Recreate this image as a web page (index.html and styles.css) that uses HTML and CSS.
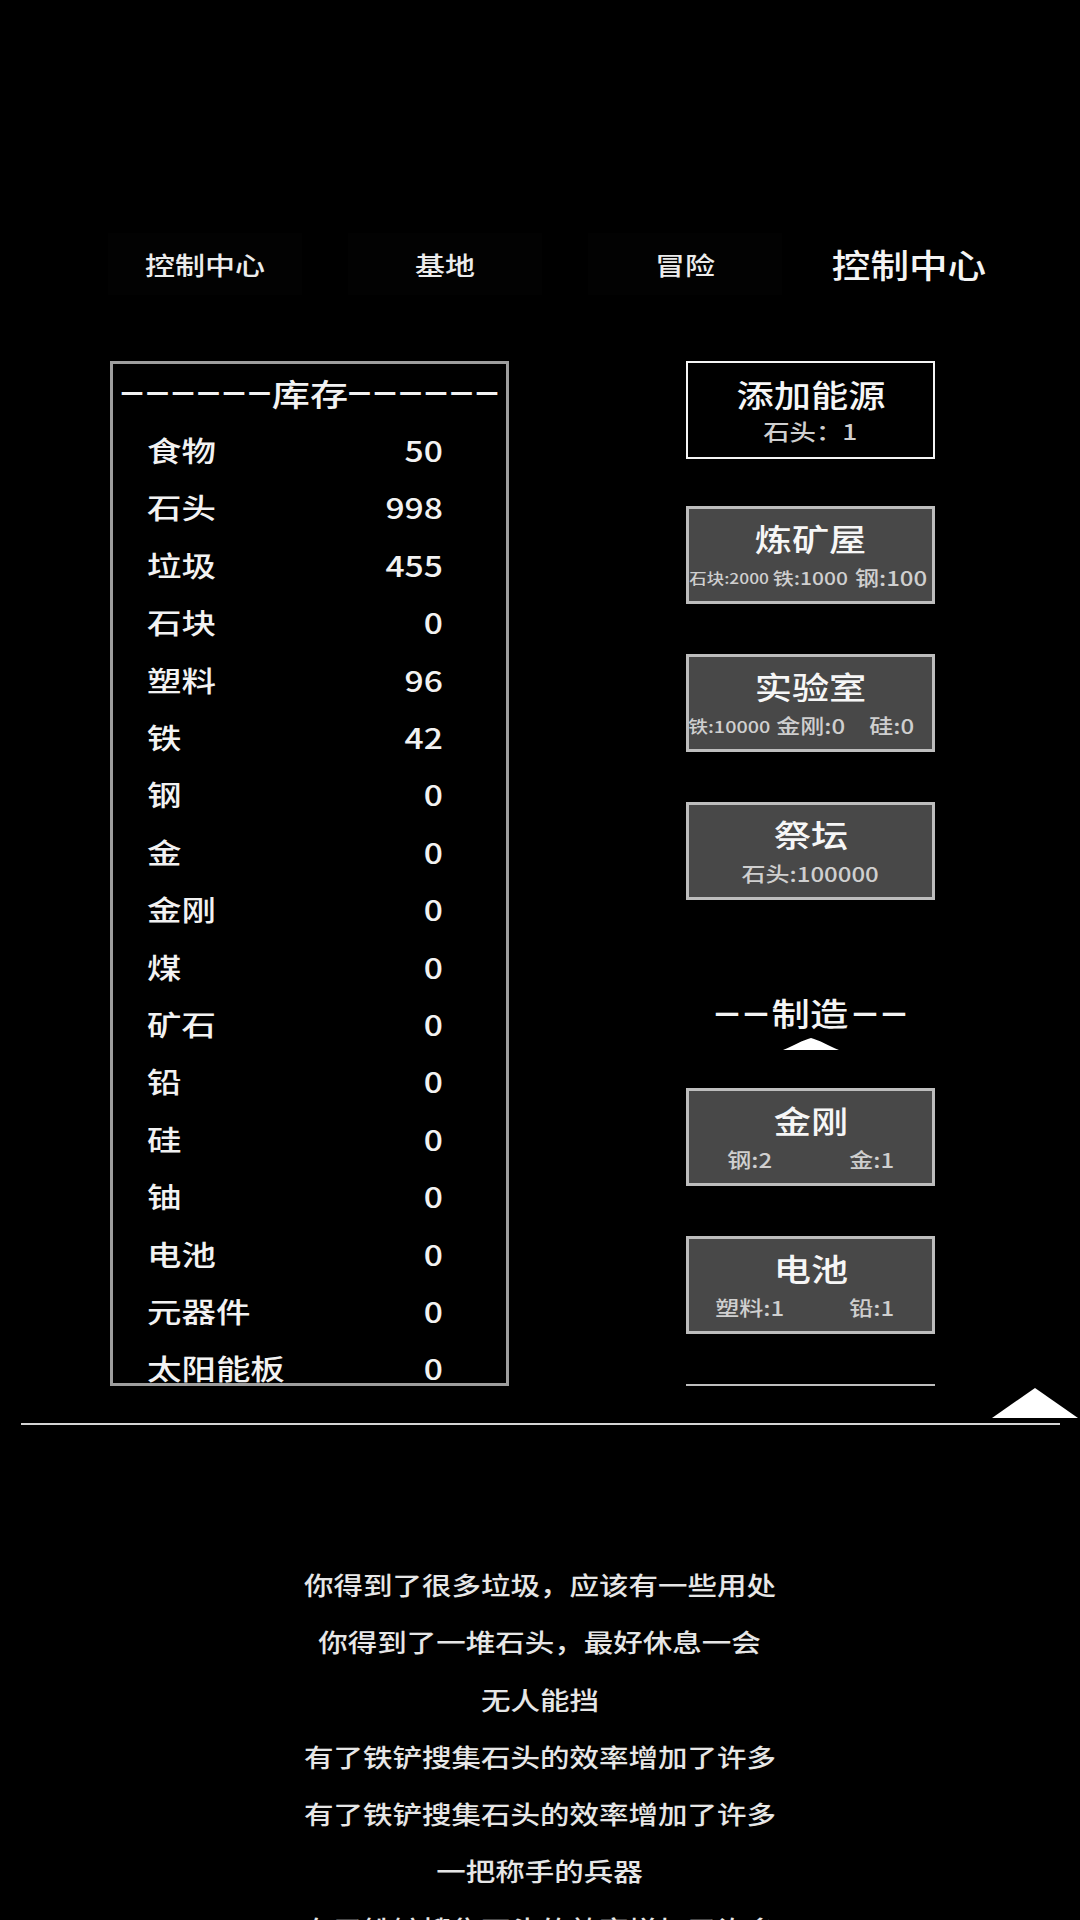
FILE: index.html
```html
<!DOCTYPE html>
<html lang="zh-CN">
<head>
<meta charset="utf-8">
<title>控制中心</title>
<link rel="stylesheet" href="styles.css">
</head>
<body>
<div class="screen">
  <nav class="tabs">
    <div class="tab"><span class="sx">控制中心</span></div>
    <div class="tab"><span class="sx">基地</span></div>
    <div class="tab"><span class="sx">冒险</span></div>
    <div class="page-title"><span class="sx">控制中心</span></div>
  </nav>

  <main class="main">
    <section class="stock">
      <div class="stock-title"><span class="dash">——————</span><span class="sx">库存</span><span class="dash">——————</span></div>
      <ul class="stock-list">
        <li class="row"><span class="name">食物</span><span class="qty">50</span></li>
        <li class="row"><span class="name">石头</span><span class="qty">998</span></li>
        <li class="row"><span class="name">垃圾</span><span class="qty">455</span></li>
        <li class="row"><span class="name">石块</span><span class="qty">0</span></li>
        <li class="row"><span class="name">塑料</span><span class="qty">96</span></li>
        <li class="row"><span class="name">铁</span><span class="qty">42</span></li>
        <li class="row"><span class="name">钢</span><span class="qty">0</span></li>
        <li class="row"><span class="name">金</span><span class="qty">0</span></li>
        <li class="row"><span class="name">金刚</span><span class="qty">0</span></li>
        <li class="row"><span class="name">煤</span><span class="qty">0</span></li>
        <li class="row"><span class="name">矿石</span><span class="qty">0</span></li>
        <li class="row"><span class="name">铅</span><span class="qty">0</span></li>
        <li class="row"><span class="name">硅</span><span class="qty">0</span></li>
        <li class="row"><span class="name">铀</span><span class="qty">0</span></li>
        <li class="row"><span class="name">电池</span><span class="qty">0</span></li>
        <li class="row"><span class="name">元器件</span><span class="qty">0</span></li>
        <li class="row"><span class="name">太阳能板</span><span class="qty">0</span></li>
      </ul>
    </section>

    <section class="actions">
      <div class="card card-light first">
        <div class="card-title"><span class="sx">添加能源</span></div>
        <div class="card-sub cols-1"><span class="sub"><span class="sx">石头：1</span></span></div>
      </div>
      <div class="card second">
        <div class="card-title"><span class="sx">炼矿屋</span></div>
        <div class="card-sub cols-3">
          <span class="sub fs14"><span class="sx">石块:2000</span></span>
          <span class="sub fs17"><span class="sx">铁:1000</span></span>
          <span class="sub"><span class="sx">钢:100</span></span>
        </div>
      </div>
      <div class="card">
        <div class="card-title"><span class="sx">实验室</span></div>
        <div class="card-sub cols-3">
          <span class="sub fs16"><span class="sx">铁:10000</span></span>
          <span class="sub"><span class="sx">金刚:0</span></span>
          <span class="sub"><span class="sx">硅:0</span></span>
        </div>
      </div>
      <div class="card">
        <div class="card-title"><span class="sx">祭坛</span></div>
        <div class="card-sub cols-1"><span class="sub"><span class="sx">石头:100000</span></span></div>
      </div>

      <div class="craft-head">
        <div class="craft-title"><span class="dash2">——</span><span class="sx">制造</span><span class="dash2">——</span></div>
        <svg class="tri-small" width="56" height="12" viewBox="0 0 56 12"><path d="M0 12 C10 8 20 2 28 0 C36 2 46 8 56 12 Z" fill="#fff"/></svg>
      </div>

      <div class="card">
        <div class="card-title"><span class="sx">金刚</span></div>
        <div class="card-sub cols-2">
          <span class="sub"><span class="sx">钢:2</span></span>
          <span class="sub"><span class="sx">金:1</span></span>
        </div>
      </div>
      <div class="card">
        <div class="card-title"><span class="sx">电池</span></div>
        <div class="card-sub cols-2">
          <span class="sub"><span class="sx">塑料:1</span></span>
          <span class="sub"><span class="sx">铅:1</span></span>
        </div>
      </div>
      <div class="card">
        <div class="card-title"><span class="sx">元器件</span></div>
        <div class="card-sub cols-2">
          <span class="sub"><span class="sx">铁:1</span></span>
          <span class="sub"><span class="sx">硅:1</span></span>
        </div>
      </div>
    </section>
  </main>

  <div class="divider">
    <svg class="tri-big" width="86" height="30" viewBox="0 0 86 30"><polygon points="43,0 86,30 0,30" fill="#fff"/></svg>
  </div>

  <ul class="log">
    <li><span class="sx">你得到了很多垃圾，应该有一些用处</span></li>
    <li><span class="sx">你得到了一堆石头，最好休息一会</span></li>
    <li><span class="sx">无人能挡</span></li>
    <li><span class="sx">有了铁铲搜集石头的效率增加了许多</span></li>
    <li><span class="sx">有了铁铲搜集石头的效率增加了许多</span></li>
    <li><span class="sx">一把称手的兵器</span></li>
    <li><span class="sx">有了铁铲搜集石头的效率增加了许多</span></li>
  </ul>
</div>
</body>
</html>
```

FILE: styles.css
```css
html, body {
  margin: 0;
  padding: 0;
  background: #000;
}

body {
  font-family: "Noto Sans CJK SC", "Noto Sans", sans-serif;
  font-weight: 500;
  color: #f2f2f2;
}

.screen {
  width: 1080px;
  height: 1920px;
  overflow: hidden;
  background: #000;
}

.sx {
  display: inline-block;
  transform: scaleX(1.2);
  transform-origin: center;
  white-space: nowrap;
}

/* ---------- tabs ---------- */
.tabs {
  display: flex;
  align-items: center;
  gap: 46px;
  padding: 233px 0 0 108px;
}

.tab {
  width: 194px;
  height: 62px;
  display: flex;
  align-items: center;
  justify-content: center;
  background: #020202;
  font-size: 25px;
  line-height: 1;
  color: #ececec;
}

.page-title {
  width: 254px;
  height: 62px;
  margin-left: -46px;
  display: flex;
  align-items: center;
  justify-content: center;
  font-size: 33px;
  line-height: 1;
  color: #f4f4f4;
}

.page-title .sx {
  transform: scaleX(1.17);
}

/* ---------- main ---------- */
.main {
  display: flex;
  gap: 177px;
  height: 1025px;
  margin-top: 66px;
  padding-left: 110px;
}

.stock {
  width: 399px;
  height: 1025px;
  box-sizing: border-box;
  border: 3px solid #9e9e9e;
  overflow: hidden;
}

.stock-title {
  height: 57.4px;
  display: flex;
  align-items: center;
  justify-content: center;
  font-size: 31px;
  line-height: 1;
}

.stock-title .sx {
  margin: 0 5px;
  transform: scaleX(1.23);
}

.dash {
  font-family: "DejaVu Sans", sans-serif;
  font-weight: bold;
  font-size: 23px;
  letter-spacing: 2.5px;
  line-height: 1;
  margin-left: 2.5px;
}

.stock-list {
  list-style: none;
  margin: 0;
  padding: 0;
}

.row {
  height: 57.4px;
  display: flex;
  align-items: center;
  justify-content: space-between;
  padding: 0 63px 0 34px;
  font-size: 28px;
  line-height: 1;
}

.name {
  display: inline-block;
  transform: scaleX(1.23);
  transform-origin: left center;
  white-space: nowrap;
}

.qty {
  display: inline-block;
  transform: scaleX(1.2);
  transform-origin: right center;
}

/* ---------- action cards ---------- */
.actions {
  width: 249px;
  height: 1025px;
  overflow: hidden;
  display: flex;
  flex-direction: column;
  flex-shrink: 0;
}

.card {
  flex-shrink: 0;
  height: 98px;
  box-sizing: border-box;
  border: 3px solid #bdbdbd;
  background: #484848;
  margin-top: 50px;
  padding-top: 8px;
  display: flex;
  flex-direction: column;
}

.card.first {
  margin-top: 0;
}

.card.second {
  margin-top: 47px;
}

.card-light {
  background: #000;
  border-color: #f5f5f5;
  border-width: 2px;
  padding-top: 10px;
}

.card-title {
  height: 40px;
  display: flex;
  align-items: center;
  justify-content: center;
  font-size: 31px;
  line-height: 1;
  color: #f6f6f6;
}

.card-sub {
  margin-top: 7px;
  height: 28px;
  display: grid;
  align-items: center;
  color: #cfcfcf;
  font-size: 20px;
  line-height: 1;
}

.card-light .card-sub {
  margin-top: 3px;
  font-size: 22px;
}

.cols-1 { grid-template-columns: 1fr; }
.cols-2 { grid-template-columns: 1fr 1fr; }
.cols-3 { grid-template-columns: 1fr 1fr 1fr; }

.sub {
  text-align: center;
  white-space: nowrap;
}

.fs14 { font-size: 14.5px; }
.fs16 { font-size: 16.5px; }
.fs17 { font-size: 17.5px; }

.craft-head {
  flex-shrink: 0;
  height: 138px;
  margin-top: 50px;
  box-sizing: border-box;
  padding-top: 42px;
  display: flex;
  flex-direction: column;
  align-items: center;
}

.craft-title {
  height: 40px;
  display: flex;
  align-items: center;
  justify-content: center;
  font-size: 32px;
  line-height: 1;
  color: #f4f4f4;
}

.craft-title .sx {
  margin: 0 6px;
}

.dash2 {
  font-family: "DejaVu Sans", sans-serif;
  font-weight: bold;
  font-size: 25px;
  letter-spacing: 4px;
  line-height: 1;
  margin-left: 4px;
}

.tri-small {
  display: block;
  margin-top: 6px;
}

.craft-head + .card {
  margin-top: 0;
}

/* ---------- divider ---------- */
.divider {
  height: 35px;
  margin: 2px 20px 0 21px;
  border-bottom: 2px solid #d4d4d4;
  display: flex;
  justify-content: flex-end;
  align-items: flex-start;
}

.tri-big {
  display: block;
  margin-right: -18px;
}

/* ---------- log ---------- */
.log {
  list-style: none;
  margin: 131px 0 0;
  padding: 0;
  text-align: center;
  font-size: 25px;
  line-height: 57.3px;
  color: #e6e6e6;
}

.log li {
  height: 57.3px;
}

.log .sx {
  transform: scaleX(1.18);
}
```
